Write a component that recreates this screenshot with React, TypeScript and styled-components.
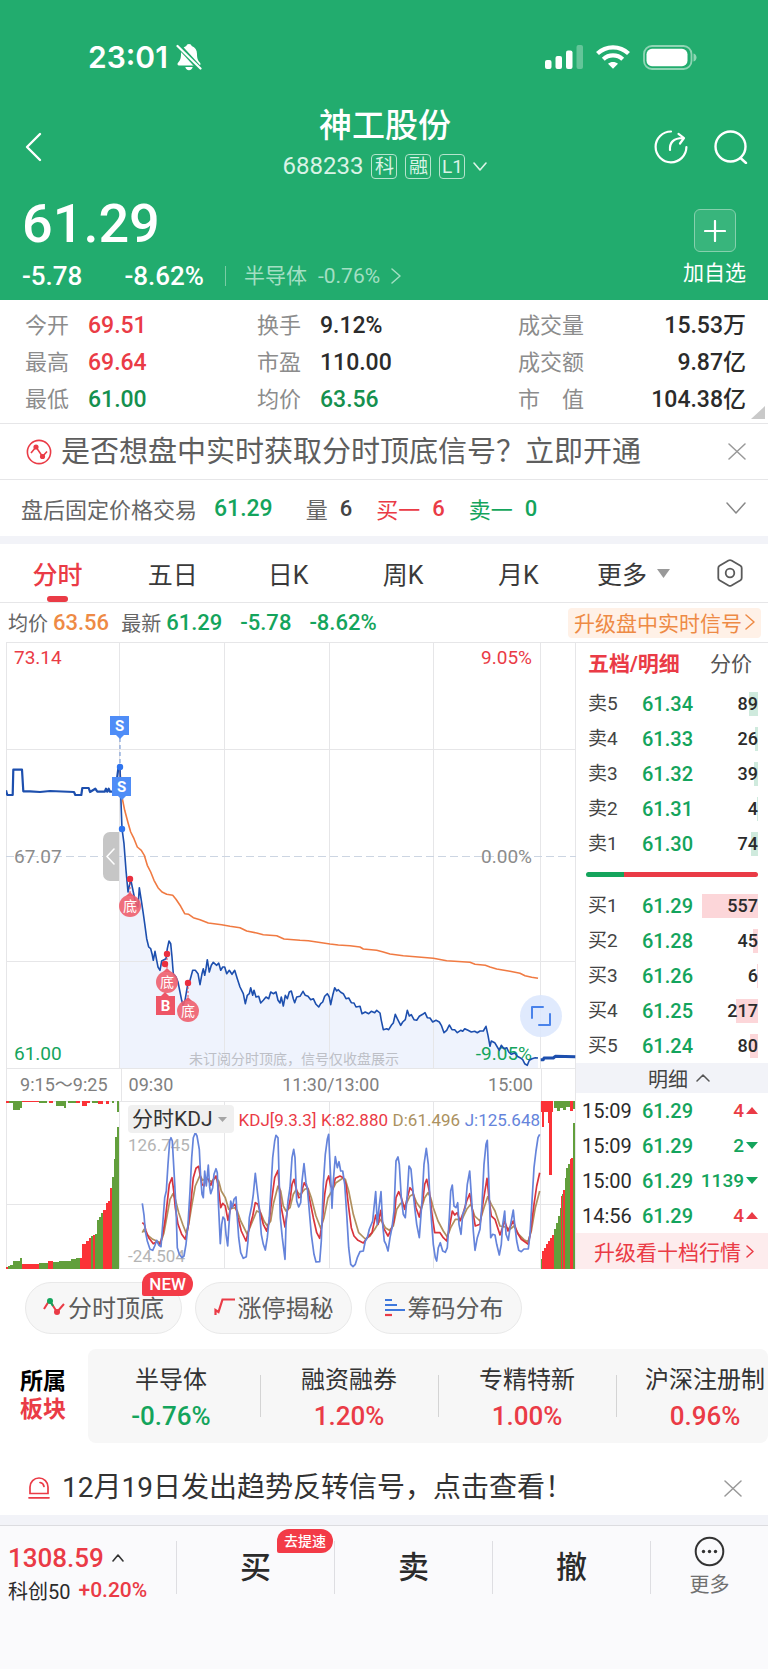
import React from "react";
import styled, { createGlobalStyle, css } from "styled-components";

const color = {
  brand: "#22ac6e",
  red: "#ea3b46",
  green: "#14a45c",
  deepGreen: "#15904e",
  orange: "#ee8a45",
  ink: "#2b2b2b",
  text: "#444",
  grey: "#8c8c8c",
  line: "#e6e6e8",
  band: "#f2f3f8",
};

type Tone = "red" | "green" | "deepGreen" | "orange" | "ink" | "text" | "grey";

const GlobalStyle = createGlobalStyle`
  * { box-sizing: border-box; }
  body {
    margin: 0;
    background: #fff;
    color: ${color.ink};
    font-family: Roboto, "Noto Sans CJK SC", sans-serif;
  }
  button, select {
    margin: 0;
    padding: 0;
    border: 0;
    background: none;
    color: inherit;
    font: inherit;
    cursor: pointer;
  }
  a { color: inherit; text-decoration: none; }
  svg { display: block; flex: none; }
  h1, p, dl, dd, dt { margin: 0; font-weight: inherit; }
`;

const Page = styled.div`
  display: flex;
  flex-direction: column;
  min-height: 100vh;
`;

/* Header */

const Header = styled.header`
  background: ${color.brand};
  color: #fff;
`;

const StatusBar = styled.div`
  display: flex;
  align-items: center;
  justify-content: space-between;
  padding: 36px 71px 26px 88px;
  height: 104px;
`;

const Clock = styled.div`
  display: flex;
  align-items: center;
  gap: 8px;
  font: 600 30px/42px Inter, sans-serif;
`;

const StatusIcons = styled.div`
  display: flex;
  align-items: center;
  gap: 13px;
`;

const NavBar = styled.div`
  display: grid;
  grid-template-columns: 120px 1fr 120px;
  align-items: center;
  height: 86px;
  padding: 0 20px 0 22px;
`;

const NavActions = styled.div`
  display: flex;
  justify-content: flex-end;
  gap: 26px;
`;

const NavTitle = styled.div`
  align-self: start;
  text-align: center;
`;

const StockName = styled.h1`
  font-size: 33px;
  font-weight: 500;
  line-height: 44px;
`;

const CodeLine = styled.div`
  display: flex;
  align-items: center;
  justify-content: center;
  gap: 8px;
  font-size: 24px;
  line-height: 36px;
  color: #d9f3e6;
`;

const Mark = styled.span`
  width: 26px;
  height: 25px;
  border: 1px solid #b5e4cd;
  border-radius: 4px;
  font-size: 19px;
  line-height: 23px;
  text-align: center;
`;

const QuoteHead = styled.div`
  display: flex;
  justify-content: space-between;
  height: 110px;
  padding: 0 22px;
`;

const Price = styled.div`
  font-size: 54px;
  font-weight: 500;
  line-height: 68px;
`;

const ChangeLine = styled.div`
  display: flex;
  align-items: center;
  font-size: 26px;
  font-weight: 500;
  line-height: 36px;
`;

const Percent = styled.span`
  margin-left: 42px;
`;

const IndustryLink = styled.a`
  display: flex;
  align-items: center;
  gap: 11px;
  margin-left: 21px;
  padding-left: 18px;
  font-size: 21px;
  font-weight: 400;
  line-height: 20px;
  color: #a3dfc3;
  border-left: 1px solid #7acca4;
`;

const AddButton = styled.button`
  display: flex;
  flex-direction: column;
  align-items: center;
  gap: 6px;
  padding-top: 19px;
  font-size: 21px;
  line-height: 30px;
`;

const AddBox = styled.span`
  display: grid;
  place-items: center;
  width: 42px;
  height: 43px;
  border: 1px solid #86d0ad;
  border-radius: 6px;
  background: #38b57c;
`;

/* Statistics */

const Stats = styled.div`
  position: relative;
  display: grid;
  grid-template-columns: 232px 1fr 228px;
  padding: 7px 22px 5px 25px;
  border-bottom: 1px solid ${color.line};
`;

const StatColumn = styled.dl<{ $spread?: boolean }>`
  display: grid;
  grid-template-columns: ${(p) => (p.$spread ? "auto 1fr" : "63px 1fr")};
  grid-auto-rows: 37px;
  align-items: center;
  font-size: 22px;
  line-height: 37px;
  color: ${color.grey};
  dd { text-align: ${(p) => (p.$spread ? "right" : "left")}; }
`;

const Num = styled.span<{ $tone?: Tone; $size?: number }>`
  font-size: ${(p) => p.$size ?? 23}px;
  font-weight: 500;
  color: ${(p) => color[p.$tone ?? "ink"]};
`;

const Corner = styled.svg`
  position: absolute;
  right: 3px;
  bottom: 4px;
`;

/* Banners */

const Banner = styled.div`
  display: flex;
  align-items: center;
  gap: 9px;
  height: 55px;
  padding: 0 22px 0 26px;
  font-size: 29px;
  line-height: 40px;
  color: #5e5e5e;
  white-space: nowrap;
`;

const Notice = styled(Banner)`
  gap: 12px;
  height: 72px;
  padding: 18px 26px 0 28px;
  font-size: 28px;
  color: #333;
`;

const BannerText = styled.a`
  flex: 1;
`;

const AfterHours = styled.div`
  display: flex;
  align-items: center;
  height: 57px;
  padding: 0 22px 0 21px;
  border-top: 1px solid ${color.line};
  font-size: 22px;
  color: #666;
`;

const Pair = styled.span<{ $tone?: Tone; $before: number }>`
  display: flex;
  align-items: center;
  gap: 12px;
  margin-left: ${(p) => p.$before}px;
  ${(p) => p.$tone && css`color: ${color[p.$tone]};`}
`;

const PushRight = styled.button`
  margin-left: auto;
`;

const Band = styled.div<{ $height: number }>`
  height: ${(p) => p.$height}px;
  background: ${color.band};
`;

/* Period tabs */

const Tabs = styled.nav`
  display: grid;
  grid-template-columns: repeat(6, 15%) 1fr;
  height: 59px;
  border-bottom: 1px solid ${color.line};
`;

const Tab = styled.button<{ $active?: boolean }>`
  position: relative;
  display: flex;
  align-items: center;
  justify-content: center;
  gap: 10px;
  font-size: 25px;
  font-weight: ${(p) => (p.$active ? 500 : 400)};
  color: ${(p) => (p.$active ? color.red : "#3a3a3a")};
  ${(p) =>
    p.$active &&
    css`
      &::after {
        content: "";
        position: absolute;
        bottom: 0;
        width: 21px;
        height: 6px;
        border-radius: 3px;
        background: ${color.red};
      }
    `}
`;

const QuoteLine = styled.div`
  display: flex;
  align-items: center;
  height: 39px;
  padding: 0 7px 0 8px;
  font-size: 20px;
  color: #666;
`;

const Gap = styled.span<{ $left: number }>`
  display: flex;
  align-items: center;
  gap: 5px;
  margin-left: ${(p) => p.$left}px;
`;

const UpgradeLink = styled.a`
  display: flex;
  align-items: center;
  gap: 3px;
  height: 30px;
  margin-left: auto;
  padding: 0 6px 2px;
  border-radius: 4px;
  background: #fff1e7;
  font-size: 21px;
  color: ${color.orange};
`;

/* Chart area */

const Market = styled.section`
  display: flex;
  padding-left: 6px;
`;

const ChartColumn = styled.div`
  flex: 1;
  min-width: 0;
`;

const ChartBox = styled.div`
  position: relative;
`;

const Chart = styled.svg`
  width: 100%;
  height: auto;
  text { font-family: Roboto, "Noto Sans CJK SC", sans-serif; }
`;

const Handle = styled.button`
  position: absolute;
  left: 17%;
  top: 190px;
  display: grid;
  place-items: center;
  width: 16px;
  height: 49px;
  border-radius: 7px 0 0 7px;
  background: #c6c6c6;
`;

const ExpandButton = styled.button`
  position: absolute;
  right: 14px;
  bottom: 32px;
  display: grid;
  place-items: center;
  width: 42px;
  height: 42px;
  border-radius: 50%;
  background: #dae6fdd9;
`;

const TimeAxis = styled.div`
  display: grid;
  grid-template-columns: 20% 1fr 6%;
  height: 32px;
  border-left: 1px solid ${color.line};
  border-right: 1px solid ${color.line};
  font-size: 18px;
  line-height: 32px;
  color: #808080;
`;

const AxisCell = styled.div`
  display: flex;
  justify-content: space-between;
  padding: 0 8px 0 7px;
  white-space: nowrap;
  &:first-child { justify-content: center; padding: 0; }
  & + & { border-left: 1px solid ${color.line}; }
`;

const KdjLegend = styled.div`
  position: absolute;
  top: 4px;
  left: 122px;
  right: 36px;
  display: flex;
  align-items: center;
  justify-content: space-between;
  font-size: 17px;
  line-height: 28px;
  white-space: nowrap;
`;

const IndicatorPicker = styled.label`
  position: relative;
  width: 106px;
  svg { position: absolute; right: 7px; top: 12px; pointer-events: none; }
`;

const IndicatorSelect = styled.select`
  appearance: none;
  width: 100%;
  height: 28px;
  padding: 0 4px;
  border-radius: 4px;
  background: #f0f0f0;
  font-size: 21px;
  color: #333;
`;

const LegendItem = styled.span<{ $color: string }>`
  color: ${(p) => p.$color};
`;

/* Order book */

const Side = styled.aside`
  flex: none;
  width: 192px;
  border-top: 1px solid ${color.line};
`;

const SideTabs = styled.div`
  display: flex;
  justify-content: space-between;
  height: 43px;
  padding: 0 16px 6px 12px;
  font-size: 21px;
`;

const SideTab = styled.button<{ $active?: boolean }>`
  font-weight: ${(p) => (p.$active ? 700 : 400)};
  color: ${(p) => (p.$active ? color.red : "#555")};
`;

const BookTable = styled.table`
  width: 100%;
  table-layout: fixed;
  border-collapse: collapse;
  font-size: 19px;
  td, th { height: 35px; padding: 0; line-height: 24px; font-weight: 400; text-align: left; }
`;

const Label = styled.th<{ $time?: boolean }>`
  width: 66px;
  && {
    padding-left: ${(p) => (p.$time ? 6 : 12)}px;
    color: ${(p) => (p.$time ? color.ink : color.text)};
    font-size: ${(p) => (p.$time ? 20 : 19)}px;
  }
`;

const PriceCell = styled.td`
  width: 54px;
  font-size: 20px;
  color: ${color.green};
  && { font-weight: 500; }
`;

const VolumeCell = styled.td`
  && { padding-right: 10px; }
`;

const Volume = styled.div<{ $side: "sell" | "buy" }>`
  position: relative;
  font-size: 18px;
  font-weight: 500;
  text-align: right;
  span { position: relative; }
  i {
    position: absolute;
    right: 0;
    top: 0;
    height: 24px;
    background: ${(p) => (p.$side === "sell" ? "#cfeadd" : "#fcd6d9")};
  }
`;

const Balance = styled.div`
  display: flex;
  align-items: center;
  height: 27px;
  padding: 0 10px;
`;

const BalancePart = styled.span<{ $share: number; $tone: Tone }>`
  flex: ${(p) => p.$share};
  height: 5px;
  background: ${(p) => color[p.$tone]};
  &:first-child { border-radius: 3px 0 0 3px; }
  &:last-child { border-radius: 0 3px 3px 0; }
`;

const DetailToggle = styled.button`
  display: flex;
  align-items: center;
  justify-content: center;
  gap: 8px;
  width: 100%;
  height: 30px;
  padding-left: 14px;
  background: ${color.band};
  font-size: 20px;
  color: #444;
`;

const Tick = styled.div<{ $tone: Tone }>`
  display: flex;
  align-items: center;
  justify-content: flex-end;
  gap: 2px;
  font-size: 19px;
  font-weight: 500;
  color: ${(p) => color[p.$tone]};
`;

const TenLevels = styled.a`
  display: flex;
  align-items: center;
  justify-content: center;
  gap: 5px;
  height: 36px;
  padding-left: 4px;
  background: #fdeced;
  font-size: 21px;
  color: ${color.red};
`;

/* Shortcuts and sectors */

const Chips = styled.div`
  display: flex;
  gap: 13px;
  padding: 13px 25px 15px;
`;

const Chip = styled.button`
  position: relative;
  display: flex;
  align-items: center;
  justify-content: center;
  gap: 3px;
  width: 157px;
  height: 52px;
  padding-bottom: 3px;
  border: 1px solid #e9e9e9;
  border-radius: 26px;
  background: #f7f7f7;
  font-size: 24px;
  color: #5c5c5c;
`;

const Badge = styled.span<{ $top: number; $right: number; $size: number }>`
  position: absolute;
  top: ${(p) => p.$top}px;
  right: ${(p) => p.$right}px;
  padding: 0 7px;
  border-radius: 12px 12px 12px 2px;
  background: #f33b47;
  font-size: ${(p) => p.$size}px;
  font-weight: 500;
  line-height: 24px;
  color: #fff;
`;

const Sectors = styled.section`
  display: flex;
  align-items: center;
  overflow: hidden;
`;

const SectorTitle = styled.div`
  flex: none;
  width: 88px;
  padding-left: 20px;
  font-size: 23px;
  font-weight: 700;
  line-height: 28px;
  color: #000;
  em { display: block; font-style: normal; color: ${color.red}; }
`;

const SectorList = styled.div`
  display: flex;
  flex: 1;
  height: 94px;
  border-radius: 8px;
  background: #f7f7f7;
  overflow: hidden;
`;

const Sector = styled.a`
  position: relative;
  flex: none;
  width: 178px;
  padding-top: 13px;
  font-size: 24px;
  line-height: 36px;
  text-align: center;
  white-space: nowrap;
  color: #333;
  &:first-child { width: 172px; padding-right: 6px; }
  & + &::before {
    content: "";
    position: absolute;
    left: 0;
    top: 26px;
    width: 1px;
    height: 42px;
    background: #d4d4d4;
  }
  span { display: block; }
`;

/* Bottom bar */

const BottomBar = styled.footer`
  flex: 1;
  display: grid;
  grid-template-columns: 176px 1fr 1fr 1fr 118px;
  align-items: start;
  min-height: 144px;
  border-top: 1px solid #dcdce0;
  background: #fafafc;
`;

const IndexBox = styled.button`
  padding: 16px 0 0 8px;
  text-align: left;
  white-space: nowrap;
`;

const IndexRow = styled.span`
  display: flex;
  align-items: center;
  gap: 8px;
  height: 32px;
  font-size: 20px;
`;

const TradeButton = styled.button`
  position: relative;
  height: 53px;
  margin-top: 15px;
  border-left: 1px solid #dedee2;
  font-size: 31px;
  font-weight: 500;
  line-height: 53px;
`;

const MoreButton = styled.button`
  display: flex;
  flex-direction: column;
  align-items: center;
  height: 53px;
  margin-top: 15px;
  border-left: 1px solid #dedee2;
  font-size: 20px;
  line-height: 30px;
  color: #707070;
  svg { margin: -5px 0 3px; }
`;

/* Icons */

const Stroke = ({ w, h, d, c = "currentColor", s = 2 }: { w: number; h: number; d: string; c?: string; s?: number }) => (
  <svg width={w} height={h} viewBox={`0 0 ${w} ${h}`} fill="none" stroke={c} strokeWidth={s} strokeLinecap="round" strokeLinejoin="round" aria-hidden="true">
    <path d={d} />
  </svg>
);

const Caret = ({ w, h, c = "#999", up }: { w: number; h: number; c?: string; up?: boolean }) => (
  <svg width={w} height={h} viewBox={`0 0 ${w} ${h}`} fill={c} aria-hidden="true">
    <path d={up ? `M0 ${h}L${w / 2} 0L${w} ${h}Z` : `M0 0H${w}L${w / 2} ${h}Z`} />
  </svg>
);

const BellOff = () => (
  <svg width="26" height="28" viewBox="0 0 26 28" aria-hidden="true">
    <path fill="#fff" d="M13 1c1.5 0 2.4.8 2.7 2 3.500 1.200 5.300 4.200 5.300 8 0 5 1.200 6.800 3 8.800.9 1 .6 2.700-1 2.700H3c-1.600 0-1.900-1.700-1-2.700 1.800-2 3-3.800 3-8.800 0-3.800 1.800-6.800 5.300-8C10.600 1.800 11.500 1 13 1ZM9.300 24h7.400c-.4 2-1.800 3.200-3.700 3.200S9.700 26 9.300 24Z" />
    <path stroke={color.brand} strokeWidth="5" d="M2 2L24 26" />
    <path stroke="#fff" strokeWidth="2.200" strokeLinecap="round" d="M1.500 3L24.500 25.500" />
  </svg>
);

const Signal = () => (
  <svg width="38" height="24" viewBox="0 0 38 24" fill="#fff" aria-hidden="true">
    <rect y="15" width="6.500" height="9" rx="2" />
    <rect x="10.500" y="11" width="6.500" height="13" rx="2" />
    <rect x="21" y="5.500" width="6.500" height="18.500" rx="2" />
    <rect x="31.500" width="6.500" height="24" rx="2" opacity=".3" />
  </svg>
);

const Wifi = () => (
  <svg width="34" height="24" viewBox="0 0 34 24" fill="none" stroke="#fff" strokeWidth="4.200" aria-hidden="true">
    <path d="M1.500 8.500C10 .2 24 .2 32.500 8.500" />
    <path d="M7.300 14.300c5.400-5.200 14-5.200 19.400 0" />
    <path d="M17 23.800l-5-5c2.800-2.500 7.200-2.500 10 0z" fill="#fff" stroke="none" />
  </svg>
);

const Battery = () => (
  <svg width="54" height="25" viewBox="0 0 54 25" aria-hidden="true">
    <rect x="1" y="1" width="47.500" height="23" rx="8" fill="none" stroke="#8fd5b4" strokeWidth="1.800" />
    <rect x="3.500" y="3.800" width="41" height="17.400" rx="5.500" fill="#fff" />
    <path d="M50.500 8.500c4 1 4 7 0 8z" fill="#8fd5b4" />
  </svg>
);

const Share = () => (
  <svg width="34" height="34" viewBox="0 0 34 34" fill="none" stroke="#fff" strokeWidth="2.200" strokeLinecap="round" strokeLinejoin="round" aria-hidden="true">
    <path d="M17 1.500A15.400 15.400 0 1 0 32.400 17" />
    <path d="M16 20c-.5-7 3-12 13-12M24.500 3.800L30 8l-4 5.500" />
  </svg>
);

const Search = () => (
  <svg width="34" height="34" viewBox="0 0 34 34" fill="none" stroke="#fff" strokeWidth="2.400" strokeLinecap="round" aria-hidden="true">
    <circle cx="16.500" cy="16.500" r="15" />
    <path d="M26.500 28l5.500 5" />
  </svg>
);

const SignalMark = () => (
  <svg width="26" height="26" viewBox="0 0 26 26" fill="none" stroke={color.red} strokeWidth="1.600" aria-hidden="true">
    <circle cx="13" cy="13" r="11.600" />
    <path d="M5 14l5-6 6.500 9.500 4.500-5" />
    <circle cx="10" cy="8" r="1.800" fill={color.red} />
    <circle cx="16.500" cy="17.500" r="1.800" fill={color.red} />
  </svg>
);

const Hexagon = () => (
  <svg width="26" height="28" viewBox="0 0 26 28" fill="none" stroke="#5a5a5a" strokeWidth="1.800" strokeLinejoin="round" aria-hidden="true">
    <path d="M11.500 1.500q1.500-.8 3 0l9 5.300q1.200.8 1.200 2.200v10q0 1.400-1.200 2.200l-9 5.300q-1.500.8-3 0l-9-5.300Q1.300 20.400 1.300 19V9q0-1.400 1.200-2.200z" />
    <circle cx="13" cy="14" r="4.300" />
  </svg>
);

const TopBottomIcon = () => (
  <svg width="22" height="20" viewBox="0 0 22 20" fill="none" stroke={color.red} strokeWidth="2" aria-hidden="true">
    <path d="M1 12l5-8" />
    <path d="M7 4l7 11 7-8" />
    <path d="M7 4l3 5" stroke={color.green} />
    <circle cx="7" cy="4" r="3" fill={color.green} stroke="none" />
    <circle cx="14" cy="15" r="3" fill={color.red} stroke="none" />
  </svg>
);

const LimitUpIcon = () => (
  <svg width="21" height="20" viewBox="0 0 21 20" fill="none" stroke={color.red} strokeWidth="2.200" aria-hidden="true">
    <path d="M1.500 18v-5l3 2L8.500 2.500H21" />
  </svg>
);

const ChipsIcon = () => (
  <svg width="21" height="20" viewBox="0 0 21 20" strokeWidth="2.200" aria-hidden="true">
    <path stroke="#3f78dc" d="M1 3h7M1 8h12M1 13h20" />
    <path stroke={color.red} d="M1 18h7" />
  </svg>
);

const Siren = () => (
  <svg width="22" height="22" viewBox="0 0 22 22" fill="none" stroke={color.red} strokeWidth="1.700" strokeLinecap="round" aria-hidden="true">
    <path d="M2 16.500V10a9 9 0 0 1 18 0v6.500zM1 20.800h20M12 5.500q3.500.7 4 4" />
  </svg>
);

const Dots = () => (
  <svg width="31" height="31" viewBox="0 0 31 31" fill="#333" aria-hidden="true">
    <circle cx="15.500" cy="15.500" r="13.800" fill="none" stroke="#333" strokeWidth="2" />
    <circle cx="9.500" cy="15.500" r="1.700" />
    <circle cx="15.500" cy="15.500" r="1.700" />
    <circle cx="21.500" cy="15.500" r="1.700" />
  </svg>
);

/* Series: samples are in thirds of a chart unit, split at the midday break */

const SECOND_HALF = 840;

const toPoints = (first: string, second: string, top: number) => {
  const read = (raw: string, shift: number) =>
    raw
      .split(" ")
      .filter(Boolean)
      .map((pair) => {
        const [x, y] = pair.split(",").map(Number);
        return `${((x + shift) / 3 - 6).toFixed(1)},${(y / 3 - top).toFixed(1)}`;
      });
  return [...read(first, 0), ...read(second, SECOND_HALF)].join(" ");
};

const auction = toPoints(
  "18,460 22,474 38,474 40,398 66,398 70,463 90,463 120,465 150,462 222,465 226,474 244,474 247,453 266,453 270,465 286,455 292,464 314,464 318,455 322,464 326,455 330,464 346,464 355,395 360,392",
  "",
  5
);

const price = toPoints(
  "360,392 362,470 366,575 372,620 378,700 384,765 392,727 400,765 406,795 414,810 418,752 424,790 430,830 434,860 440,905 446,930 452,935 456,950 460,970 465,943 470,970 474,990 480,1000 485,972 492,968 498,965 502,935 507,912 512,920 516,960 520,1010 528,1020 534,1035 540,1065 545,1090 549,1105 555,1090 560,1060 564,1037 570,1030 578,1000 586,1000 594,1010 600,1043 606,1010 610,995 614,1015 618,995 622,968 628,1005 634,985 640,976 650,985 656,978 662,1000 668,990 674,990 680,1010 688,1000 696,1012 704,1000 712,1025 720,1050 730,1070 736,1100 742,1075 748,1070 752,1052 758,1075 762,1060 768,1080 776,1078 782,1098 790,1090 798,1080 806,1085 812,1065 820,1070 828,1065 834,1090 840,1098 844,1080 850,1107 856,1075 862,1085 868,1065 874,1062 880,1085 884,1097 890,1080",
  "60,1078 69,1063 76,1075 84,1078 92,1088 100,1085 108,1102 116,1110 122,1100 128,1095 134,1078 142,1070 148,1080 152,1103 158,1075 164,1052 170,1062 175,1058 182,1066 190,1070 198,1085 206,1083 214,1097 222,1098 228,1110 240,1108 246,1130 256,1125 266,1130 274,1123 284,1127 290,1120 300,1128 304,1150 310,1178 320,1175 326,1178 334,1165 340,1158 346,1132 352,1145 362,1165 368,1155 376,1148 382,1120 388,1137 394,1133 402,1148 410,1150 418,1138 428,1132 435,1127 442,1142 450,1143 458,1155 468,1150 478,1155 484,1165 492,1187 500,1180 508,1164 516,1178 524,1178 532,1187 542,1180 548,1183 554,1175 564,1180 574,1185 584,1183 592,1187 600,1182 610,1182 618,1168 624,1195 630,1228 634,1212 644,1217 652,1230 658,1240 664,1225 672,1235 680,1232 686,1245 694,1252 704,1248 712,1258 720,1262 728,1268 734,1280 742,1285 748,1270 756,1265 766,1262 774,1263",
  5
);

const closing = toPoints("", "782,1268 790,1268 792,1263 820,1263 826,1258 886,1259", 5);

const average = toPoints(
  "360,400 362,430 366,480 374,520 385,560 392,585 402,605 412,630 424,640 433,655 442,685 452,705 462,730 474,752 486,765 500,772 518,775 528,787 542,808 554,830 566,832 580,842 600,848 625,858 665,863 690,868 720,872 740,882 770,888 790,893 830,896 852,906 900,910",
  "85,911 110,915 150,921 175,924 210,926 240,930 250,936 290,940 310,945 330,951 370,956 460,964 500,971 570,976 585,982 616,985 630,990 650,996 690,1003 720,1009 735,1016 755,1021 774,1024",
  5
);

const kdjJ = toPoints(
  "427,337 432,372 436,420 442,450 450,475 458,478 464,465 470,448 476,462 483,467 488,400 494,320 499,300 504,220 509,150 513,140 517,150 522,240 528,350 532,470 538,490 546,500 552,495 558,460 564,400 570,300 575,200 580,140 586,125 591,135 598,175 602,260 606,310 610,320 614,240 619,285 625,222 629,290 632,308 638,290 642,250 648,233 652,245 655,330 661,458 665,400 669,378 674,385 678,430 683,465 687,400 692,330 697,350 702,325 708,318 712,380 716,440 722,485 730,502 739,497 744,450 748,380 755,345 760,310 766,247 772,300 778,350 784,430 790,460 796,477 802,440 808,380 813,290 818,200 824,150 828,133 834,140 837,250 841,380 847,440",
  "15,505 18,400 24,330 30,290 36,200 41,175 45,200 50,330 56,348 62,335 66,270 72,218 78,275 82,290 88,360 94,430 102,490 108,513 119,512 124,450 130,280 136,190 142,145 146,130 150,220 154,300 156,352 160,270 166,197 172,230 177,212 182,240 188,240 194,280 200,370 206,470 212,520 219,527 226,520 232,500 240,482 250,480 256,450 262,440 268,415 278,390 282,350 287,302 292,400 297,350 303,302 308,400 313,450 318,460 324,480 330,440 336,410 342,360 348,210 354,198 358,220 364,320 370,370 376,380 382,310 387,225 393,235 398,290 404,350 410,400 418,440 426,330 432,220 439,172 445,220 450,330 456,410 460,460 466,500 470,510 475,470 481,455 488,480 496,484 502,470 508,380 512,300 517,282 522,345 528,350 533,335 537,400 543,430 548,370 556,350 562,280 569,240 575,330 580,420 585,478 592,440 600,415 606,340 612,220 618,160 622,148 626,260 632,440 638,430 645,432 650,460 658,492 664,460 668,400 674,360 678,430 685,448 690,410 700,357 704,400 710,450 716,478 724,482 732,474 745,474 750,430 756,330 762,230 768,180 774,140 779,130",
  10
);

const kdjK = toPoints(
  "427,395 433,400 438,420 446,440 460,458 470,452 480,460 488,430 495,390 501,340 508,280 516,260 521,300 526,350 534,400 545,430 556,445 564,410 572,340 580,260 588,232 596,226 600,250 606,280 612,285 618,262 625,265 632,283 640,265 648,255 654,280 662,350 668,337 676,345 684,388 692,350 706,340 714,380 724,420 738,450 748,410 758,375 766,335 774,340 782,370 790,400 800,420 808,390 816,320 824,260 834,238 838,290 844,350",
  "15,408 22,360 30,330 36,280 42,265 48,290 56,320 62,318 68,290 73,275 82,290 90,330 100,380 110,425 119,442 126,400 134,310 140,270 146,255 152,285 158,295 166,262 174,258 180,255 190,260 198,280 206,350 214,410 222,435 234,448 250,456 262,440 276,425 287,372 294,400 302,358 310,410 324,435 334,415 342,390 348,320 356,302 364,320 374,355 382,320 390,290 398,300 408,350 418,378 428,330 434,280 440,265 448,300 456,370 464,425 480,425 490,440 500,450 510,400 517,360 524,372 532,365 540,390 550,365 560,330 569,308 576,350 586,405 600,400 610,330 621,262 628,330 634,375 645,385 660,432 674,390 684,420 700,390 712,425 724,445 745,460 752,420 762,340 770,285 779,245",
  10
);

const kdjD = toPoints(
  "427,425 432,415 440,430 458,445 482,455 492,425 502,370 510,325 519,308 526,325 536,365 548,400 558,425 566,400 576,340 586,285 600,253 608,268 620,262 634,272 648,260 656,270 664,300 676,320 686,355 704,350 712,360 722,390 742,430 754,400 770,360 782,365 792,390 802,405 812,390 820,340 834,285 842,300 850,345",
  "18,360 30,350 40,310 48,297 60,312 74,295 84,292 94,320 108,375 122,412 132,380 144,320 156,300 168,275 188,262 196,265 206,300 220,370 236,425 256,444 270,435 284,415 302,385 316,410 328,418 340,405 350,355 362,337 376,345 390,315 400,310 410,335 424,355 434,320 444,305 452,320 460,350 474,390 490,420 502,438 512,410 526,385 546,385 560,355 572,340 584,375 600,390 612,350 623,317 634,340 645,360 660,405 676,408 690,415 702,405 716,430 732,446 744,452 754,420 766,350 779,300",
  10
);

/* Auction volume bars: [x, width, height, colour] in chart units */
type Bar = [number, number, number, "r" | "g"];

const volumeBars: Bar[] = [
  [0, 2, 2, "r"], [2, 2, 3, "g"], [4, 3, 4, "g"], [7, 7, 8, "g"], [14, 2, 11, "g"],
  [16, 17, 5, "r"], [33, 9, 6, "g"], [42, 5, 8, "r"], [47, 6, 7, "g"], [53, 6, 8, "g"],
  [59, 6, 8, "g"], [65, 5, 10, "g"], [70, 4, 11, "g"], [74, 2, 11, "r"], [76, 4, 25, "r"],
  [80, 3, 28, "r"], [83, 2, 31, "r"], [85, 2, 33, "g"], [87, 2, 34, "r"], [89, 2, 35, "g"],
  [91, 2, 35, "r"], [91, 1, 35, "g"], [91, 2, 49, "g"], [93, 2, 52, "g"], [95, 2, 56, "g"],
  [97, 3, 59, "r"], [100, 2, 66, "r"], [102, 2, 68, "r"], [104, 2, 81, "r"],
  [106, 2, 92, "g"], [108, 1, 110, "g"], [109, 2, 132, "g"], [111, 2, 142, "g"],
  [535, 1, 10, "g"], [536, 2, 18, "r"], [538, 2, 21, "r"], [540, 2, 25, "r"], [542, 2, 28, "r"],
  [544, 2, 31, "r"], [546, 2, 34, "r"], [548, 2, 40, "g"], [550, 2, 46, "g"], [552, 2, 53, "g"],
  [554, 1, 61, "g"], [555, 1, 73, "r"], [556, 1, 75, "g"], [557, 2, 79, "r"], [559, 1, 91, "g"],
  [560, 2, 101, "g"], [562, 2, 105, "g"], [564, 1, 110, "r"], [565, 2, 111, "r"], [567, 2, 146, "g"],
];

const unmatchedBars: Bar[] = [
  [0, 3, 2, "r"], [3, 4, 2, "g"], [7, 7, 9, "g"], [14, 2, 7, "g"], [16, 17, 1, "r"],
  [33, 8, 2, "g"], [43, 4, 2, "r"], [50, 8, 5, "g"], [58, 2, 7, "g"], [62, 8, 2, "g"],
  [70, 4, 2, "r"], [76, 5, 5, "r"], [81, 3, 2, "r"], [86, 6, 2, "g"], [92, 5, 3, "r"],
  [100, 3, 3, "r"], [106, 2, 2, "g"], [111, 2, 11, "g"],
  [535, 12, 11, "r"], [536, 2, 26, "r"], [542, 2, 22, "r"], [543, 3, 74, "r"], [548, 3, 7, "g"],
  [551, 3, 10, "g"], [554, 3, 7, "g"], [557, 3, 9, "g"], [560, 4, 6, "g"], [564, 3, 10, "r"], [567, 2, 8, "g"],
];

const barFill = { r: "#fb3237", g: "#629f3c" };

const Flag = ({ x, y, letter, fill }: { x: number; y: number; letter: string; fill: string }) => (
  <g>
    <path d={`M${x} ${y}h19v19h-19z`} fill={fill} />
    <text x={x + 9.5} y={y + 15} textAnchor="middle" fontSize="15" fontWeight="700" fill="#fff">{letter}</text>
  </g>
);

const BottomMark = ({ x, y, dotY }: { x: number; y: number; dotY: number }) => (
  <g>
    <path d={`M${x} ${dotY}V${y - 10}`} stroke="#ee4755" strokeDasharray="2 2" />
    <path d={`M${x - 4} ${y - 10}l4-4 4 4z`} fill="#ee6070" />
    <circle cx={x} cy={y} r="11" fill="#ee5f6e" fillOpacity=".9" />
    <text x={x} y={y + 5} textAnchor="middle" fontSize="14" fill="#fff">底</text>
    <circle cx={x} cy={dotY} r="3.2" fill="#ea2f3f" />
  </g>
);

const PriceChart = () => (
  <ChartBox>
    <Chart viewBox="0 0 570 427" role="img" aria-label="分时走势图">
      <polygon points={`114,427 ${price} 532,427`} fill="#eff3fd" />
      <path d="M.5 .5V427M113.500 0V427M218.500 0V427M323.500 0V427M427.500 0V427M534.500 0V427M569.500 0V427M0 .5H570M0 107.500H570M0 319.500H570M0 426.500H570" stroke={color.line} fill="none" />
      <path d="M0 214.500H570" stroke="#ccd5e2" strokeDasharray="8 4" />
      <g fontSize="19" fontWeight="400">
        <text x="8" y="22" fill={color.red}>73.14</text>
        <text x="8" y="221" fill={color.grey}>67.07</text>
        <text x="8" y="418" fill={color.green}>61.00</text>
        <g textAnchor="end">
          <text x="526" y="22" fill={color.red}>9.05%</text>
          <text x="526" y="221" fill={color.grey}>0.00%</text>
          <text x="526" y="418" fill={color.green}>-9.05%</text>
        </g>
      </g>
      <text x="183" y="422" fontSize="14" fill="#bdbfc6">未订阅分时顶底，信号仅收盘展示</text>
      <g fill="none" strokeLinejoin="round">
        <polyline points={average} stroke="#f07a42" strokeWidth="1.600" />
        <polyline points={price} stroke="#1d4fae" strokeWidth="1.600" />
        <polyline points={auction} stroke="#1d4fae" strokeWidth="2.200" />
        <polyline points={closing} stroke="#1d4fae" strokeWidth="3" />
      </g>
      <path d="M114 96V122" stroke="#6b8fd0" strokeDasharray="4 3" />
      <path d="M110 93h8l-4 4zM112 154h8l-4 4z" fill="#4f8df7" />
      <Flag x={104} y={74} letter="S" fill="#4f8df7" />
      <Flag x={106} y={135} letter="S" fill="#4f8df7" />
      <circle cx="114" cy="125" r="3.200" fill="#2f74ee" />
      <circle cx="116" cy="187" r="3.200" fill="#2f74ee" />
      <BottomMark x={124} y={264} dotY={237} />
      <BottomMark x={161} y={340} dotY={312} />
      <circle cx="159" cy="322" r="3.200" fill="#ea2f3f" />
      <path d="M155 354l4-4 4 4z" fill="#ee5566" />
      <Flag x={150} y={354} letter="B" fill="#ee5566" />
      <BottomMark x={182} y={369} dotY={341} />
    </Chart>
    <Handle aria-label="收起竞价">
      <Stroke w={9} h={17} d="M8 1L1 8.500L8 16" c="#fff" s={1.6} />
    </Handle>
    <ExpandButton aria-label="全屏">
      <Stroke w={20} h={20} d="M1 12V1H12M19 8V19H8" c="#4a83ea" s={2} />
    </ExpandButton>
  </ChartBox>
);

const KdjChart = () => (
  <ChartBox>
    <Chart viewBox="0 0 570 168" role="img" aria-label="分时KDJ">
      <path d="M.5 0V168M113.500 0V168M218.500 0V168M323.500 0V168M427.500 0V168M534.500 0V168M569.500 0V168M0 .5H570M0 103.500H570M0 167.500H570" stroke={color.line} fill="none" />
      {volumeBars.map(([x, w, h, c], i) => (
        <rect key={i} x={x} y={168 - h} width={w} height={h} fill={barFill[c]} />
      ))}
      {unmatchedBars.map(([x, w, h, c], i) => (
        <rect key={i} x={x} y={0} width={w} height={h} fill={barFill[c]} />
      ))}
      <text x="122" y="50" fontSize="17" fill="#b4b4b4">126.745</text>
      <text x="122" y="161" fontSize="17" fill="#b4b4b4">-24.504</text>
      <g fill="none" strokeWidth="1.700" strokeLinejoin="round">
        <polyline points={kdjD} stroke="#b0905e" />
        <polyline points={kdjK} stroke="#d9343c" />
        <polyline points={kdjJ} stroke="#6584db" />
      </g>
    </Chart>
    <KdjLegend>
      <IndicatorPicker>
        <IndicatorSelect aria-label="指标" defaultValue="kdj">
          <option value="kdj">分时KDJ</option>
        </IndicatorSelect>
        <Caret w={9} h={5} c="#a5a5a5" />
      </IndicatorPicker>
      <LegendItem $color={color.red}>KDJ[9.3.3]</LegendItem>
      <LegendItem $color={color.red}>K:82.880</LegendItem>
      <LegendItem $color="#ab9160">D:61.496</LegendItem>
      <LegendItem $color="#6584db">J:125.648</LegendItem>
    </KdjLegend>
  </ChartBox>
);

type Level = [string, string, number];

const sells: Level[] = [
  ["卖5", "61.34", 89],
  ["卖4", "61.33", 26],
  ["卖3", "61.32", 39],
  ["卖2", "61.31", 4],
  ["卖1", "61.30", 74],
];

const buys: Level[] = [
  ["买1", "61.29", 557],
  ["买2", "61.28", 45],
  ["买3", "61.26", 6],
  ["买4", "61.25", 217],
  ["买5", "61.24", 80],
];

const ticks: [string, string, string, boolean][] = [
  ["15:09", "61.29", "4", true],
  ["15:09", "61.29", "2", false],
  ["15:00", "61.29", "1139", false],
  ["14:56", "61.29", "4", true],
];

const Levels = ({ rows, side }: { rows: Level[]; side: "sell" | "buy" }) => (
  <BookTable>
    <tbody>
      {rows.map(([label, level, volume]) => (
        <tr key={label}>
          <Label scope="row">{label}</Label>
          <PriceCell>{level}</PriceCell>
          <VolumeCell>
            <Volume $side={side}>
              <i style={{ width: Math.max(1, Math.round(volume / 10)) }} />
              <span>{volume}</span>
            </Volume>
          </VolumeCell>
        </tr>
      ))}
    </tbody>
  </BookTable>
);

const OrderBook = () => (
  <Side>
    <SideTabs>
      <SideTab $active>五档/明细</SideTab>
      <SideTab>分价</SideTab>
    </SideTabs>
    <Levels rows={sells} side="sell" />
    <Balance>
      <BalancePart $share={22} $tone="green" />
      <BalancePart $share={78} $tone="red" />
    </Balance>
    <Levels rows={buys} side="buy" />
    <DetailToggle>
      明细
      <Stroke w={14} h={8} d="M1 7L7 1L13 7" c="#555" s={1.5} />
    </DetailToggle>
    <BookTable>
      <tbody>
        {ticks.map(([time, level, volume, up], i) => (
          <tr key={i}>
            <Label scope="row" $time>{time}</Label>
            <PriceCell>{level}</PriceCell>
            <VolumeCell>
              <Tick $tone={up ? "red" : "green"}>
                {volume}
                <Caret w={12} h={7} up={up} c={up ? color.red : color.green} />
              </Tick>
            </VolumeCell>
          </tr>
        ))}
      </tbody>
    </BookTable>
    <TenLevels href="#levels">
      升级看十档行情
      <Stroke w={8} h={13} d="M1 1L7 6.500L1 12" s={1.5} />
    </TenLevels>
  </Side>
);

const statColumns: { spread?: boolean; items: [string, string, Tone][] }[] = [
  { items: [["今开", "69.51", "red"], ["最高", "69.64", "red"], ["最低", "61.00", "deepGreen"]] },
  { items: [["换手", "9.12%", "ink"], ["市盈", "110.00", "ink"], ["均价", "63.56", "deepGreen"]] },
  { spread: true, items: [["成交量", "15.53万", "ink"], ["成交额", "9.87亿", "ink"], ["市\u3000值", "104.38亿", "ink"]] },
];

const sectors: [string, string, Tone][] = [
  ["半导体", "-0.76%", "green"],
  ["融资融券", "1.20%", "red"],
  ["专精特新", "1.00%", "red"],
  ["沪深注册制", "0.96%", "red"],
];

const BackButton = styled.button`
  justify-self: start;
`;

export default function App() {
  return (
    <Page>
      <GlobalStyle />
      <Header>
        <StatusBar>
          <Clock>
            23:01
            <BellOff />
          </Clock>
          <StatusIcons>
            <Signal />
            <Wifi />
            <Battery />
          </StatusIcons>
        </StatusBar>
        <NavBar>
          <BackButton aria-label="返回">
            <Stroke w={24} h={30} d="M18 2L5 15L18 28" s={2.4} />
          </BackButton>
          <NavTitle>
            <StockName>神工股份</StockName>
            <CodeLine>
              688233
              <Mark>科</Mark>
              <Mark>融</Mark>
              <Mark>L1</Mark>
              <Stroke w={14} h={9} d="M1 1L7 8L13 1" s={1.6} />
            </CodeLine>
          </NavTitle>
          <NavActions>
            <button aria-label="分享"><Share /></button>
            <button aria-label="搜索"><Search /></button>
          </NavActions>
        </NavBar>
        <QuoteHead>
          <div>
            <Price>61.29</Price>
            <ChangeLine>
              -5.78
              <Percent>-8.62%</Percent>
              <IndustryLink href="#industry">
                半导体 <span>-0.76%</span>
                <Stroke w={10} h={16} d="M1 1L9 8L1 15" s={1.5} />
              </IndustryLink>
            </ChangeLine>
          </div>
          <AddButton>
            <AddBox>
              <Stroke w={22} h={22} d="M11 1V21M1 11H21" s={2.2} />
            </AddBox>
            加自选
          </AddButton>
        </QuoteHead>
      </Header>

      <Stats>
        {statColumns.map((column, i) => (
          <StatColumn key={i} $spread={column.spread}>
            {column.items.map(([label, value, tone]) => (
              <React.Fragment key={label}>
                <dt>{label}</dt>
                <dd><Num $tone={tone}>{value}</Num></dd>
              </React.Fragment>
            ))}
          </StatColumn>
        ))}
        <Corner width="14" height="13" viewBox="0 0 14 13" aria-hidden="true">
          <path d="M14 0V13H0Z" fill="#c9c9c9" />
        </Corner>
      </Stats>

      <Banner>
        <SignalMark />
        <BannerText href="#signal">是否想盘中实时获取分时顶底信号？立即开通</BannerText>
        <button aria-label="关闭">
          <Stroke w={18} h={17} d="M1 1L17 16M17 1L1 16" c="#999" s={1.5} />
        </button>
      </Banner>

      <AfterHours>
        盘后固定价格交易
        <Pair $before={17}><Num $tone="green">61.29</Num></Pair>
        <Pair $before={33}>量 <Num $tone="text" $size={22}>6</Num></Pair>
        <Pair $before={24} $tone="red">买一 <Num $tone="red" $size={22}>6</Num></Pair>
        <Pair $before={24} $tone="green">卖一 <Num $tone="green" $size={22}>0</Num></Pair>
        <PushRight aria-label="展开">
          <Stroke w={20} h={12} d="M1 1L10 11L19 1" c="#888" s={1.5} />
        </PushRight>
      </AfterHours>
      <Band $height={8} />

      <Tabs>
        <Tab $active>分时</Tab>
        <Tab>五日</Tab>
        <Tab>日K</Tab>
        <Tab>周K</Tab>
        <Tab>月K</Tab>
        <Tab>更多 <Caret w={13} h={9} /></Tab>
        <Tab aria-label="设置"><Hexagon /></Tab>
      </Tabs>

      <QuoteLine>
        <Gap $left={0}>均价 <Num $size={22} $tone="orange">63.56</Num></Gap>
        <Gap $left={12}>最新 <Num $size={22} $tone="green">61.29</Num></Gap>
        <Gap $left={18}><Num $size={22} $tone="green">-5.78</Num></Gap>
        <Gap $left={18}><Num $size={22} $tone="green">-8.62%</Num></Gap>
        <UpgradeLink href="#upgrade">
          升级盘中实时信号
          <Stroke w={10} h={16} d="M1 1L9 8L1 15" s={1.5} />
        </UpgradeLink>
      </QuoteLine>

      <Market>
        <ChartColumn>
          <PriceChart />
          <TimeAxis>
            <AxisCell>9:15～9:25</AxisCell>
            <AxisCell>
              <span>09:30</span>
              <span>11:30/13:00</span>
              <span>15:00</span>
            </AxisCell>
            <AxisCell />
          </TimeAxis>
          <KdjChart />
        </ChartColumn>
        <OrderBook />
      </Market>

      <Chips>
        <Chip>
          <TopBottomIcon />
          分时顶底
          <Badge $top={-11} $right={-12} $size={17}>NEW</Badge>
        </Chip>
        <Chip><LimitUpIcon />涨停揭秘</Chip>
        <Chip><ChipsIcon />筹码分布</Chip>
      </Chips>

      <Sectors>
        <SectorTitle>所属<em>板块</em></SectorTitle>
        <SectorList>
          {sectors.map(([name, change, tone]) => (
            <Sector key={name} href="#sector">
              {name}
              <span><Num $size={26} $tone={tone}>{change}</Num></span>
            </Sector>
          ))}
        </SectorList>
      </Sectors>

      <Notice>
        <Siren />
        <BannerText href="#trend">12月19日发出趋势反转信号，点击查看！</BannerText>
        <button aria-label="关闭">
          <Stroke w={18} h={17} d="M1 1L17 16M17 1L1 16" c="#999" s={1.5} />
        </button>
      </Notice>
      <Band $height={10} />

      <BottomBar>
        <IndexBox>
          <IndexRow>
            <Num $tone="red" $size={26}>1308.59</Num>
            <Stroke w={12} h={8} d="M1 7L6 1L11 7" c="#333" s={1.6} />
          </IndexRow>
          <IndexRow>
            科创50 <Num $tone="red" $size={21}>+0.20%</Num>
          </IndexRow>
        </IndexBox>
        <TradeButton>
          买
          <Badge $top={-12} $right={1} $size={14}>去提速</Badge>
        </TradeButton>
        <TradeButton>卖</TradeButton>
        <TradeButton>撤</TradeButton>
        <MoreButton>
          <Dots />
          更多
        </MoreButton>
      </BottomBar>
    </Page>
  );
}
